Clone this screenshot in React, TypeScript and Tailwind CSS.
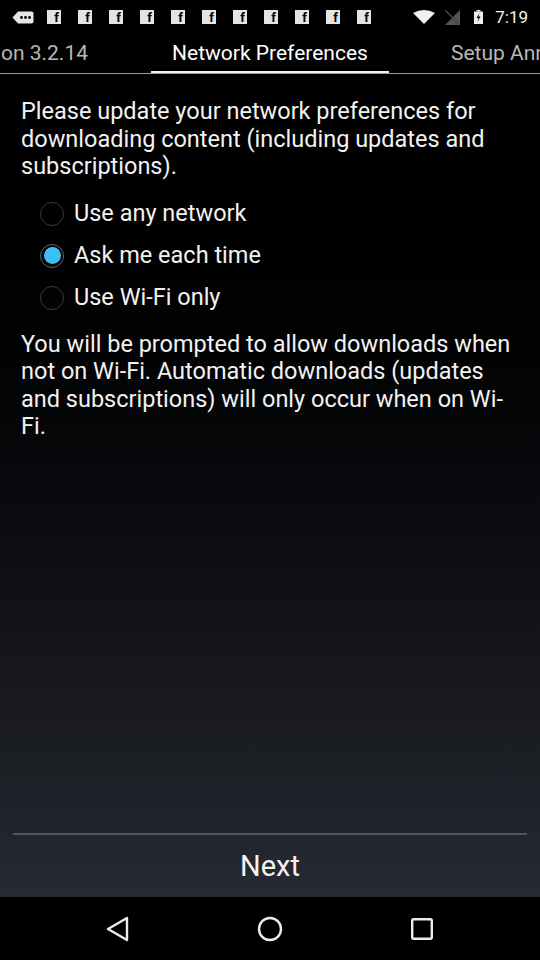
import React, { useState } from "react";

const OPTIONS = ["Use any network", "Ask me each time", "Use Wi-Fi only"];

function MessageIcon() {
  return (
    <svg width="22" height="13" viewBox="0 0 22 13">
      <path d="M6 0.5 H19.5 A2 2 0 0 1 21.5 2.5 V10.5 A2 2 0 0 1 19.5 12.5 H6 L0.5 6.5 Z" fill="#e6e6e6" />
      <circle cx="9.5" cy="6.5" r="1.4" fill="#000" />
      <circle cx="13.5" cy="6.5" r="1.4" fill="#000" />
      <circle cx="17.5" cy="6.5" r="1.4" fill="#000" />
    </svg>
  );
}

function FbIcon() {
  return (
    <div className="w-[14px] h-[14px] bg-[#e4e4e4] flex items-end justify-end pr-[2px]">
      <span className="text-[13px] leading-[12px] font-bold text-black">f</span>
    </div>
  );
}

function StatusBar() {
  return (
    <div className="h-[34px] flex items-center pl-[12px] pr-[12px] bg-black">
      <MessageIcon />
      <div className="flex gap-[17px] ml-[13px]">
        {Array.from({ length: 11 }).map((_, i) => (
          <FbIcon key={i} />
        ))}
      </div>
      <div className="flex-1" />
      <svg width="22" height="14" viewBox="0 0 22 14">
        <path d="M0 3 Q11 -3 22 3 L11 14 Z" fill="#f2f2f2" />
      </svg>
      <svg width="15" height="15" viewBox="0 0 15 15" className="ml-[10px]">
        <path d="M15 0 V15 H0 Z" fill="#555" />
        <path d="M1 1 L14 14" stroke="#222" strokeWidth="1.6" />
        <path d="M0 0 L15 15" stroke="#777" strokeWidth="0.8" />
      </svg>
      <svg width="9" height="14" viewBox="0 0 9 14" className="ml-[14px]">
        <rect x="2.5" y="0" width="4" height="1.5" fill="#eee" />
        <rect x="0" y="1.5" width="9" height="12.5" fill="#eee" />
        <path d="M5.5 3 L2.5 8 H4.5 L3.5 12 L6.5 6.5 H4.5 Z" fill="#000" />
      </svg>
      <span className="ml-[12px] text-[17px] text-[#f2f2f2] leading-none">7:19</span>
    </div>
  );
}

function Tabs() {
  return (
    <div className="h-[40px] flex overflow-hidden border-b border-[#9a9a9a] bg-black whitespace-nowrap text-[21px]">
      <div className="w-[151px] shrink-0 flex justify-end items-center pr-[63px] text-[#b8b8b8]">Version 3.2.14</div>
      <div className="w-[238px] shrink-0 relative flex justify-center items-center text-white">
        Network Preferences
        <div className="absolute left-0 right-0 -bottom-px h-[3px] bg-[#f2f2f2]" />
      </div>
      <div className="shrink-0 flex items-center pl-[62px] text-[#b8b8b8]">Setup Announcements</div>
    </div>
  );
}

function Radio({ checked }: { checked: boolean }) {
  if (checked) {
    return (
      <div className="w-[24px] h-[24px] rounded-full border border-[#5a6670] flex items-center justify-center">
        <div className="w-[17px] h-[17px] rounded-full bg-[#3cc0f2]" />
      </div>
    );
  }
  return <div className="w-[24px] h-[24px] rounded-full border border-[#3a3a3a]" />;
}

function NavBar() {
  return (
    <div className="h-[63px] bg-black flex items-center justify-center">
      <div className="w-[152px] flex justify-center">
        <svg width="24" height="26" viewBox="0 0 24 26">
          <path d="M21 2 V24 L2 13 Z" fill="none" stroke="#ececec" strokeWidth="2.4" strokeLinejoin="round" />
        </svg>
      </div>
      <div className="w-[152px] flex justify-center">
        <svg width="26" height="26" viewBox="0 0 26 26">
          <circle cx="13" cy="13" r="11" fill="none" stroke="#ececec" strokeWidth="2.4" />
        </svg>
      </div>
      <div className="w-[152px] flex justify-center">
        <svg width="22" height="22" viewBox="0 0 22 22">
          <rect x="1.2" y="1.2" width="19.6" height="19.6" rx="1.5" fill="none" stroke="#ececec" strokeWidth="2.4" />
        </svg>
      </div>
    </div>
  );
}

export default function App() {
  const [choice, setChoice] = useState(1);

  return (
    <div className="w-[540px] h-[960px] flex flex-col bg-black overflow-hidden" style={{ fontFamily: "Roboto, 'Noto Sans', sans-serif" }}>
      <StatusBar />
      <Tabs />
      <div className="flex-1 flex flex-col bg-gradient-to-b from-[#000000] to-[#272a32]">
        <div className="flex-1 px-[21px] pt-[24px] text-[#f2f2f2] text-[23.5px] leading-[27.5px]">
          <p>Please update your network preferences for downloading content (including updates and subscriptions).</p>
          <div className="mt-[12px] flex flex-col pl-[19px]">
            {OPTIONS.map((label, i) => (
              <button
                key={label}
                type="button"
                onClick={() => setChoice(i)}
                className="h-[42px] flex items-center gap-[10px] text-left"
              >
                <Radio checked={choice === i} />
                <span>{label}</span>
              </button>
            ))}
          </div>
          <p className="mt-[12px]">
            You will be prompted to allow downloads when not on Wi-Fi. Automatic downloads (updates and subscriptions) will only occur when on Wi-Fi.
          </p>
        </div>
        <div className="px-[13px]">
          <div className="h-[2px] bg-[#50555d]" />
        </div>
        <button type="button" className="h-[62px] pt-[2px] flex items-center justify-center text-[29px] text-[#f2f2f2]">
          Next
        </button>
      </div>
      <NavBar />
    </div>
  );
}
